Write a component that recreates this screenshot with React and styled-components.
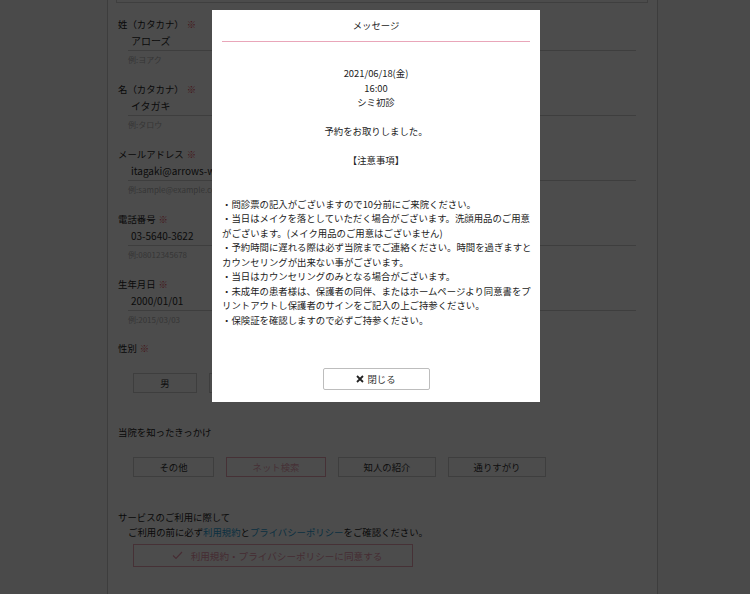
import React from 'react';
import styled, { createGlobalStyle, css } from 'styled-components';

const GlobalStyle = createGlobalStyle`
  html, body {
    margin: 0;
    padding: 0;
    background: #f8f8f8;
  }
  body {
    font-family: 'Noto Sans CJK JP', 'Noto Sans', sans-serif;
    color: #333;
    overflow: hidden;
  }
`;

const Page = styled.div`
  min-height: 594px;
`;

const Container = styled.div`
  box-sizing: border-box;
  width: 551px;
  min-height: 594px;
  margin-left: 107px;
  padding: 0 21px 0 10px;
  background: #fff;
  border-left: 1px solid #cdcdcd;
  border-right: 1px solid #cdcdcd;
`;

const TopBox = styled.div`
  height: 2px;
  margin: 0 -12px 13px -2px;
  border: 1px solid #d4d4d4;
  border-top: none;
`;

const Field = styled.div`
  margin-bottom: 14px;
`;

const Label = styled.div`
  font-size: 9.4px;
  line-height: 16px;
  height: 16px;
  color: #1e1e1e;
`;

const Required = styled.span`
  color: #e6505e;
  margin-left: 3px;
`;

const Value = styled.div`
  margin-left: 10px;
  padding-left: 3px;
  height: 18px;
  line-height: 18px;
  font-size: 10px;
  color: #2a2a2a;
  border-bottom: 1px solid #cfcfcf;
  white-space: nowrap;
`;

const Hint = styled.div`
  margin: 2px 0 0 10px;
  font-size: 8px;
  line-height: 14px;
  color: #b4b4b4;
`;

const SectionLabel = styled(Label)`
  margin-top: ${({ $top }) => $top || 0}px;
`;

const OptionRow = styled.div`
  display: flex;
  gap: 12px;
  margin: 17px 0 0 15px;
`;

const Option = styled.div`
  box-sizing: border-box;
  width: ${({ $w }) => $w}px;
  height: 20px;
  display: flex;
  align-items: center;
  justify-content: center;
  font-size: 9.4px;
  background: #fff;
  color: #333;
  border: 1px solid #cfcfcf;
  ${({ $active }) =>
    $active &&
    css`
      border-color: #eaa3b5;
      color: #eaa3b5;
    `}
`;

const Notice = styled.div`
  margin-top: 32px;
  font-size: 9.4px;
  line-height: 16px;
  color: #1e1e1e;
`;

const NoticeText = styled.div`
  margin-left: 10px;
  line-height: 15px;
  white-space: nowrap;
`;

const Link = styled.span`
  color: #2a9fd8;
`;

const AgreeButton = styled.div`
  box-sizing: border-box;
  width: 280px;
  height: 23px;
  margin: 4px 0 0 15px;
  display: flex;
  align-items: center;
  justify-content: center;
  gap: 8px;
  padding-left: 8px;
  font-size: 9.6px;
  color: #e994aa;
  border: 1px solid #eaa3b5;
  background: #fff;
`;

const Overlay = styled.div`
  position: fixed;
  inset: 0;
  background: rgba(0, 0, 0, 0.7);
`;

const Modal = styled.div`
  position: fixed;
  left: 212px;
  top: 10px;
  width: 328px;
  height: 392px;
  background: #fff;
  display: flex;
  flex-direction: column;
  font-size: 9.4px;
  color: #222;
`;

const ModalTitle = styled.div`
  height: 31px;
  line-height: 30px;
  text-align: center;
`;

const Divider = styled.div`
  height: 1px;
  margin: 0 10px;
  background: #e9a6b9;
`;

const ModalBody = styled.div`
  padding: 24px 10px 0;
  line-height: 14.5px;
`;

const Center = styled.div`
  text-align: center;
  min-height: 14.5px;
`;

const Bullet = styled.div`
  white-space: nowrap;
`;

const ModalFooter = styled.div`
  margin-top: auto;
  padding-bottom: 12px;
  display: flex;
  justify-content: center;
`;

const CloseButton = styled.div`
  box-sizing: border-box;
  width: 107px;
  height: 22px;
  display: flex;
  align-items: center;
  justify-content: center;
  gap: 3px;
  border: 1px solid #bdbdbd;
  border-radius: 2px;
  background: #fff;
  color: #333;
  font-size: 9.4px;
`;

const fields = [
  { label: '姓（カタカナ）', value: 'アローズ', hint: '例:ヨアク' },
  { label: '名（カタカナ）', value: 'イタガキ', hint: '例:タロウ' },
  { label: 'メールアドレス', value: 'itagaki@arrows-wc.co.jp', hint: '例:sample@example.com' },
  { label: '電話番号', value: '03-5640-3622', hint: '例:08012345678' },
  { label: '生年月日', value: '2000/01/01', hint: '例:2015/03/03' },
];

const notes = [
  ['・問診票の記入がございますので10分前にご来院ください。'],
  ['・当日はメイクを落としていただく場合がございます。洗顔用品のご用意', 'がございます。(メイク用品のご用意はございません)'],
  ['・予約時間に遅れる際は必ず当院までご連絡ください。時間を過ぎますと', 'カウンセリングが出来ない事がございます。'],
  ['・当日はカウンセリングのみとなる場合がございます。'],
  ['・未成年の患者様は、保護者の同伴、またはホームページより同意書をプ', 'リントアウトし保護者のサインをご記入の上ご持参ください。'],
  ['・保険証を確認しますので必ずご持参ください。'],
];

const Check = () => (
  <svg width="11" height="9" viewBox="0 0 11 9" fill="none">
    <path d="M1 4.5 L4 7.5 L10 1" stroke="#e994aa" strokeWidth="1.2" />
  </svg>
);

const Cross = () => (
  <svg width="8" height="8" viewBox="0 0 8 8">
    <path d="M1 1 L7 7 M7 1 L1 7" stroke="#222" strokeWidth="1.8" />
  </svg>
);

export default function App() {
  return (
    <Page>
      <GlobalStyle />
      <Container>
        <TopBox />
        {fields.map((f) => (
          <Field key={f.label}>
            <Label>
              {f.label}
              <Required>※</Required>
            </Label>
            <Value>{f.value}</Value>
            <Hint>{f.hint}</Hint>
          </Field>
        ))}
        <SectionLabel $top={-1}>
          性別<Required>※</Required>
        </SectionLabel>
        <OptionRow>
          <Option $w={64}>男</Option>
          <Option $w={64}>女</Option>
          <Option $w={64}>その他</Option>
        </OptionRow>
        <SectionLabel $top={31}>当院を知ったきっかけ</SectionLabel>
        <OptionRow>
          <Option $w={81}>その他</Option>
          <Option $w={100} $active>
            ネット検索
          </Option>
          <Option $w={98}>知人の紹介</Option>
          <Option $w={98}>通りすがり</Option>
        </OptionRow>
        <Notice>
          サービスのご利用に際して
          <NoticeText>
            ご利用の前に必ず<Link>利用規約</Link>と<Link>プライバシーポリシー</Link>をご確認ください。
          </NoticeText>
        </Notice>
        <AgreeButton>
          <Check />
          利用規約・プライバシーポリシーに同意する
        </AgreeButton>
      </Container>
      <Overlay />
      <Modal>
        <ModalTitle>メッセージ</ModalTitle>
        <Divider />
        <ModalBody>
          <Center>2021/06/18(金)</Center>
          <Center>16:00</Center>
          <Center>シミ初診</Center>
          <Center />
          <Center>予約をお取りしました。</Center>
          <Center />
          <Center>【注意事項】</Center>
          <Center />
          <Center />
          {notes.map((lines) => (
            <Bullet key={lines[0]}>
              {lines.map((l, i) => (
                <React.Fragment key={i}>
                  {i > 0 && <br />}
                  {l}
                </React.Fragment>
              ))}
            </Bullet>
          ))}
        </ModalBody>
        <ModalFooter>
          <CloseButton>
            <Cross />
            閉じる
          </CloseButton>
        </ModalFooter>
      </Modal>
    </Page>
  );
}
